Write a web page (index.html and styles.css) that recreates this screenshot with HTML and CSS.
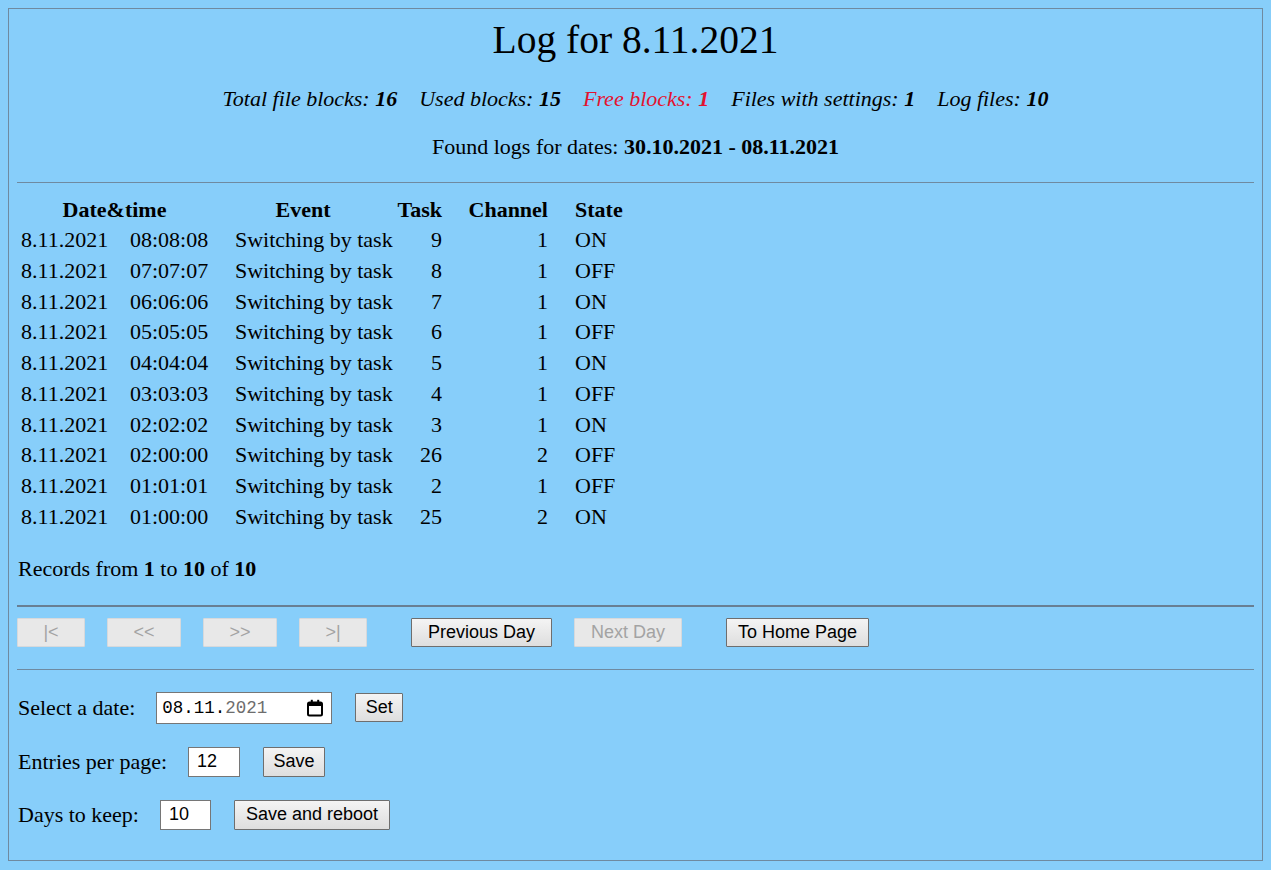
FILE: index.html
```html
<!DOCTYPE html>
<html lang="en">
<head>
<meta charset="utf-8">
<title>Log for 8.11.2021</title>
<link rel="stylesheet" href="styles.css">
</head>
<body>
<div class="panel">
  <h1 class="title">Log for 8.11.2021</h1>
  <p class="stats">
    <span class="stat">Total file blocks: <b>16</b></span>
    <span class="stat">Used blocks: <b>15</b></span>
    <span class="stat free">Free blocks: <b>1</b></span>
    <span class="stat">Files with settings: <b>1</b></span>
    <span class="stat">Log files: <b>10</b></span>
  </p>
  <p class="found">Found logs for dates: <b>30.10.2021 - 08.11.2021</b></p>
  <hr class="rule rule-top">
  <table class="log">
    <thead>
      <tr>
        <th class="c-dt" colspan="2">Date&amp;time</th>
        <th class="c-event">Event</th>
        <th class="c-task">Task</th>
        <th class="c-chan">Channel</th>
        <th class="c-state">State</th>
      </tr>
    </thead>
    <tbody>
      <tr><td class="c-date">8.11.2021</td><td class="c-time">08:08:08</td><td class="c-event">Switching by task</td><td class="c-task">9</td><td class="c-chan">1</td><td class="c-state">ON</td></tr>
      <tr><td class="c-date">8.11.2021</td><td class="c-time">07:07:07</td><td class="c-event">Switching by task</td><td class="c-task">8</td><td class="c-chan">1</td><td class="c-state">OFF</td></tr>
      <tr><td class="c-date">8.11.2021</td><td class="c-time">06:06:06</td><td class="c-event">Switching by task</td><td class="c-task">7</td><td class="c-chan">1</td><td class="c-state">ON</td></tr>
      <tr><td class="c-date">8.11.2021</td><td class="c-time">05:05:05</td><td class="c-event">Switching by task</td><td class="c-task">6</td><td class="c-chan">1</td><td class="c-state">OFF</td></tr>
      <tr><td class="c-date">8.11.2021</td><td class="c-time">04:04:04</td><td class="c-event">Switching by task</td><td class="c-task">5</td><td class="c-chan">1</td><td class="c-state">ON</td></tr>
      <tr><td class="c-date">8.11.2021</td><td class="c-time">03:03:03</td><td class="c-event">Switching by task</td><td class="c-task">4</td><td class="c-chan">1</td><td class="c-state">OFF</td></tr>
      <tr><td class="c-date">8.11.2021</td><td class="c-time">02:02:02</td><td class="c-event">Switching by task</td><td class="c-task">3</td><td class="c-chan">1</td><td class="c-state">ON</td></tr>
      <tr><td class="c-date">8.11.2021</td><td class="c-time">02:00:00</td><td class="c-event">Switching by task</td><td class="c-task">26</td><td class="c-chan">2</td><td class="c-state">OFF</td></tr>
      <tr><td class="c-date">8.11.2021</td><td class="c-time">01:01:01</td><td class="c-event">Switching by task</td><td class="c-task">2</td><td class="c-chan">1</td><td class="c-state">OFF</td></tr>
      <tr><td class="c-date">8.11.2021</td><td class="c-time">01:00:00</td><td class="c-event">Switching by task</td><td class="c-task">25</td><td class="c-chan">2</td><td class="c-state">ON</td></tr>
    </tbody>
  </table>
  <p class="records">Records from <b>1</b> to <b>10</b> of <b>10</b></p>
  <hr class="rule rule-thick">
  <div class="nav">
    <button class="btn b-first" disabled>|&lt;</button>
    <button class="btn b-prev" disabled>&lt;&lt;</button>
    <button class="btn b-next" disabled>&gt;&gt;</button>
    <button class="btn b-last" disabled>&gt;|</button>
    <button class="btn b-pday">Previous Day</button>
    <button class="btn b-nday" disabled>Next Day</button>
    <button class="btn b-home">To Home Page</button>
  </div>
  <hr class="rule rule-low">
  <div class="form-row row-date">
    <span class="label">Select a date:</span>
    <span class="date-input"><span class="date-text">08.11.<span class="date-year">2021</span></span><svg class="cal" width="18" height="18" viewBox="0 0 18 18" aria-hidden="true"><rect x="2" y="3.5" width="14" height="13" rx="1.5" fill="none" stroke="#000" stroke-width="2"/><rect x="2" y="3" width="14" height="4" fill="#000"/><rect x="4.8" y="0.8" width="2" height="3" fill="#000"/><rect x="11.2" y="0.8" width="2" height="3" fill="#000"/></svg></span>
    <button class="btn b-set">Set</button>
  </div>
  <div class="form-row row-entries">
    <span class="label">Entries per page:</span>
    <input class="num" type="text" value="12">
    <button class="btn b-save">Save</button>
  </div>
  <div class="form-row row-days">
    <span class="label">Days to keep:</span>
    <input class="num num-days" type="text" value="10">
    <button class="btn b-reboot">Save and reboot</button>
  </div>
</div>
</body>
</html>
```
FILE: styles.css
```css
html, body {
  background: #87cefa;
}
body {
  margin: 8px;
  font-family: "Liberation Serif", "Times New Roman", serif;
  font-size: 22px;
  color: #000;
}
.panel {
  border: 1px solid #6f8aa0;
  padding: 0 8px 29px 8px;
}
.title {
  margin: 9px 0 0 0;
  font-size: 39.5px;
  line-height: 45px;
  font-weight: normal;
  text-align: center;
}
.stats {
  margin: 24px 0 0 0;
  line-height: 24px;
  display: flex;
  justify-content: center;
  gap: 22px;
  font-style: italic;
}
.free {
  color: #e3122f;
}
.found {
  margin: 24px 0 0 0;
  line-height: 24px;
  text-align: center;
}
.rule {
  border: 0;
  border-top: 1px solid #6f8aa0;
  height: 0;
  margin: 24px 0 0 0;
}
.rule-top {
  margin-top: 23px;
}
.rule-thick {
  border-top: 2px solid #687f93;
}
.rule-low {
  margin-top: 22px;
}
.log {
  margin-top: 12px;
  border-collapse: separate;
  border-spacing: 0;
}
.log th, .log td {
  padding: 0;
  line-height: 30.75px;
  white-space: nowrap;
}
.log thead th {
  line-height: 30px;
  font-weight: bold;
}
.log .c-dt { text-align: center; }
.log .c-date { padding-left: 4px; width: 105px; text-align: left; }
.log .c-time { padding-left: 4px; width: 82px; text-align: left; }
.log td.c-event { padding-left: 23px; width: 159px; text-align: left; }
.log th.c-event { text-align: center; }
.log .c-task { padding-right: 4px; width: 48px; text-align: right; }
.log .c-chan { padding-right: 4px; width: 102px; text-align: right; }
.log .c-state { padding-left: 23px; width: 85px; text-align: left; }
.records {
  margin: 24px 0 0 0;
  line-height: 24px;
  padding-left: 1px;
}
.nav {
  margin-top: 11px;
  display: flex;
  gap: 22px;
}
.btn {
  box-sizing: border-box;
  height: 29px;
  padding: 0;
  font-family: "Liberation Sans", Arial, sans-serif;
  font-size: 18px;
  color: #000;
  background: linear-gradient(#f4f4f4, #dedede);
  border: 1px solid #6e6e6e;
  border-radius: 1px;
}
.btn:disabled {
  background: #e8e8e8;
  border-color: #d6d9dc;
  color: #a3a3a3;
}
.b-first { width: 68px; }
.b-prev { width: 74px; }
.b-next { width: 74px; }
.b-last { width: 68px; }
.b-pday { width: 141px; margin-left: 22px; }
.b-nday { width: 108px; }
.b-home { width: 143px; margin-left: 22px; }
.form-row {
  display: flex;
  align-items: center;
  height: 32px;
  padding-left: 1px;
}
.row-date { margin-top: 22px; }
.row-entries { margin-top: 22px; }
.row-days { margin-top: 21px; }
.label {
  line-height: 24px;
  margin-right: 21px;
}
.date-input {
  box-sizing: border-box;
  width: 176px;
  height: 32px;
  background: #fff;
  border: 1px solid #767676;
  display: flex;
  align-items: center;
  justify-content: space-between;
  padding: 0 7px 0 5px;
  margin-right: 23px;
}
.date-text {
  font-family: "Liberation Mono", "Courier New", monospace;
  font-size: 17.5px;
  color: #000;
}
.date-year {
  color: #6d6d6d;
}
.cal {
  display: block;
}
.num {
  box-sizing: border-box;
  width: 52px;
  height: 30px;
  margin: 0 23px 0 0;
  padding: 0 0 0 8px;
  border: 1px solid #767676;
  background: #fff;
  font-family: "Liberation Sans", Arial, sans-serif;
  font-size: 18px;
  color: #000;
  border-radius: 0;
  outline: none;
}
.num-days { width: 51px; }
.b-set { width: 48px; }
.b-save { width: 62px; height: 30px; }
.b-reboot { width: 156px; height: 30px; }
```
